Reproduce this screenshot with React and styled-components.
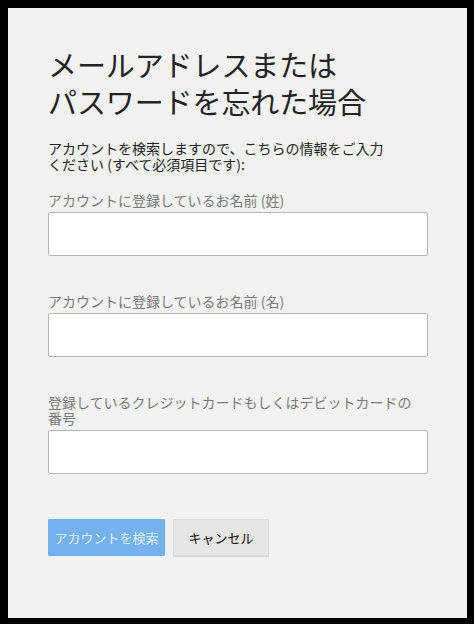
import React from "react";
import styled, { createGlobalStyle } from "styled-components";

const Global = createGlobalStyle`
  html, body { margin: 0; padding: 0; height: 100%; background: #000; }
  #root { height: 100%; }
  * { box-sizing: border-box; }
`;

const Frame = styled.div`
  height: 624px;
  width: 474px;
  padding: 8px 7px 6px 8px;
  background: #000;
  display: flex;
`;

const Panel = styled.div`
  flex: 1;
  background: #f2f2f2;
  padding: 38px 39px 0 40px;
  font-family: "Noto Sans CJK JP", "Noto Sans", sans-serif;
  display: flex;
  flex-direction: column;
`;

const Title = styled.h1`
  margin: 0 0 20px;
  font-size: 29px;
  line-height: 37px;
  font-weight: 400;
  color: #222;
  letter-spacing: -0.1px;
`;

const Intro = styled.p`
  margin: 0 0 20px;
  font-size: 14px;
  line-height: 16px;
  color: #222;
`;

const Field = styled.div`
  display: flex;
  flex-direction: column;
  margin-bottom: ${(p) => p.$gap}px;
`;

const Label = styled.label`
  font-size: 14px;
  line-height: 16px;
  color: #7a7a7a;
  margin-bottom: 4px;
`;

const Input = styled.input`
  width: 380px;
  height: 44px;
  border: 1px solid #b5b5b5;
  border-radius: 2px;
  background: #fff;
  outline: none;
  padding: 0 8px;
  font-size: 14px;
`;

const Actions = styled.div`
  display: flex;
  gap: 8px;
`;

const Button = styled.button`
  height: 37px;
  padding: 0;
  width: ${(p) => p.$w}px;
  font-family: inherit;
  font-size: 13px;
  border-radius: 1px;
  cursor: pointer;
  border: 1px solid ${(p) => (p.$primary ? "#74b2ef" : "#dcdcdc")};
  background: ${(p) => (p.$primary ? "#74b2ef" : "#e6e6e6")};
  color: ${(p) => (p.$primary ? "#e3effb" : "#111")};
  box-shadow: ${(p) => (p.$primary ? "none" : "0 1px 1px rgba(0,0,0,0.12)")};
`;

export default function App() {
  return (
    <>
      <Global />
      <Frame>
        <Panel>
          <Title>
            メールアドレスまたは
            <br />
            パスワードを忘れた場合
          </Title>
          <Intro>
            アカウントを検索しますので、こちらの情報をご入力
            <br />
            ください (すべて必須項目です):
          </Intro>
          <Field $gap={37}>
            <Label>アカウントに登録しているお名前 (姓)</Label>
            <Input type="text" />
          </Field>
          <Field $gap={37}>
            <Label>アカウントに登録しているお名前 (名)</Label>
            <Input type="text" />
          </Field>
          <Field $gap={45}>
            <Label>
              登録しているクレジットカードもしくはデビットカードの
              <br />
              番号
            </Label>
            <Input type="text" />
          </Field>
          <Actions>
            <Button $primary $w={117}>アカウントを検索</Button>
            <Button $w={96}>キャンセル</Button>
          </Actions>
        </Panel>
      </Frame>
    </>
  );
}
